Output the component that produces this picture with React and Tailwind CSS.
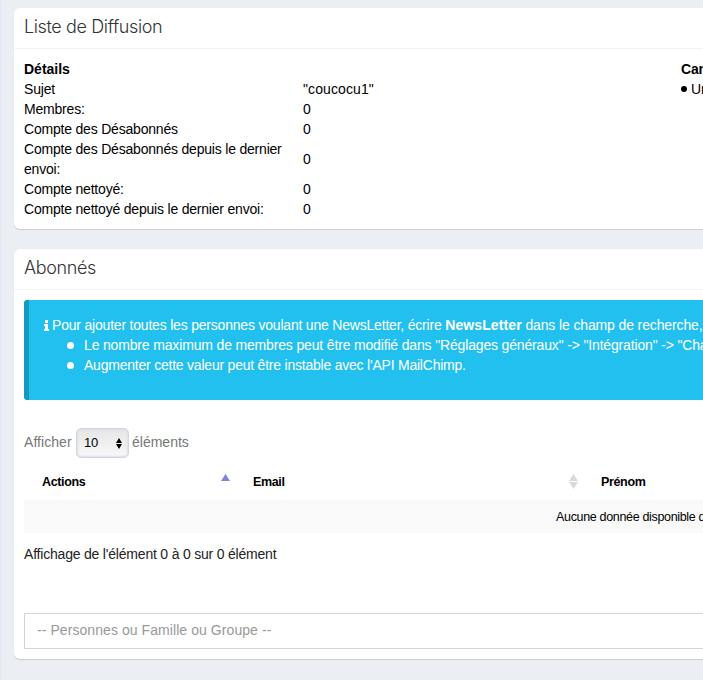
const rows = [
  ['Sujet', '"coucocu1"'],
  ['Membres:', '0'],
  ['Compte des Désabonnés', '0'],
  ['Compte des Désabonnés depuis le dernier envoi:', '0'],
  ['Compte nettoyé:', '0'],
  ['Compte nettoyé depuis le dernier envoi:', '0'],
];

function Card({ title, className, children }) {
  return (
    <section className={`w-[1000px] rounded-md bg-white shadow-[0_1px_1px_rgba(0,0,0,0.14)] ${className}`}>
      <h3 className="h-[41px] border-b border-[#f4f4f4] pl-2.5 font-['Inter','Liberation_Sans',sans-serif] text-[18px] leading-[38px] font-light tracking-[-0.38px] text-[#333]">
        {title}
      </h3>
      {children}
    </section>
  );
}

function Bullet() {
  return <span className="mr-[10px] size-[7px] rounded-full bg-current" />;
}

export default function App() {
  return (
    <div className="h-[680px] w-[703px] overflow-hidden border-l-2 border-[#e6e8f4] bg-[#ebeef3] pt-2 pl-3 font-['Liberation_Sans',Arial,sans-serif] text-[14px] leading-5 tracking-[-0.2px] text-black">
      <Card title="Liste de Diffusion" className="h-[221px]">
        <div className="flex pt-2.5 pl-2.5">
          <div className="w-[657px]">
            <div className="font-bold tracking-[0px]">Détails</div>
            {rows.map(([label, value]) => (
              <div key={label} className="flex items-center">
                <div className="w-[279px] pr-4">{label}</div>
                <div className="tracking-[0.1px]">{value}</div>
              </div>
            ))}
          </div>
          <div className="whitespace-nowrap">
            <div className="font-bold">Campagnes</div>
            <div className="flex items-center">
              <span className="mr-[4px] size-[6px] rounded-full bg-current" />
              Une
            </div>
          </div>
        </div>
      </Card>

      <Card title="Abonnés" className="mt-5 h-[410px]">
        <div className="pt-2.5 pl-2.5">
          <div className="h-[100px] rounded-[3px] border-l-5 border-[#1799bd] bg-[#22c0ef] pt-[15px] pl-[15px] tracking-[-0.16px] whitespace-nowrap text-white">
            <div className="flex items-center">
              <svg className="mr-[3px] h-[11px] w-[5px]" viewBox="0 0 5 11" fill="currentColor">
                <path d="M1 0h3v3H1zM0 4h4v5h1v2H0V9h1V6H0z" />
              </svg>
              <span className="tracking-[-0.2px]">
                Pour ajouter toutes les personnes voulant une NewsLetter, écrire <b className="font-bold tracking-[0.1px]">NewsLetter</b> <span className="tracking-[-0.13px]">dans le champ de recherche,</span>
              </span>
            </div>
            <ul className="pl-[23px]">
              <li className="flex items-center">
                <Bullet />
                Le nombre maximum de membres peut être modifié dans "Réglages généraux" -&gt; "Intégration" -&gt; "Charger"
              </li>
              <li className="flex items-center tracking-[-0.22px]">
                <Bullet />
                Augmenter cette valeur peut être instable avec l'API MailChimp.
              </li>
            </ul>
          </div>

          <div className="mt-7 flex h-[30px] items-center text-[#777]">
            <span className="-mt-0.5 w-[52px] tracking-[0.05px]">Afficher</span>
            <div className="flex h-[30px] w-[53px] items-center justify-between rounded-[5px] border border-[#d2d6de] bg-linear-to-b from-[#e6e6e6] to-[#f8f8f8] pr-[6px] pl-[7px] text-[13px] text-black shadow-[inset_0_0_2px_1px_#dcdfe8]">
              <span>10</span>
              <svg className="h-[11px] w-[6px]" viewBox="0 0 6 11">
                <path d="M3 0l3 5H0zM0 6h6L3 11z" />
              </svg>
            </div>
            <span className="-mt-0.5 ml-[3px] tracking-[0px]">éléments</span>
          </div>

          <div className="flex h-[42px] items-center pt-1.5 pl-[18px] text-[12.5px] font-bold tracking-[-0.35px]">
            <span className="w-[179px]">Actions</span>
            <svg className="mt-[-9px] h-[7px] w-[9px]" viewBox="0 0 9 7">
              <path d="M4.5 0L9 7H0z" fill="#8085dc" />
            </svg>
            <span className="ml-[23px] w-[316px]">Email</span>
            <svg className="-mt-px h-[15px] w-[9px]" viewBox="0 0 9 15" fill="#d9d9d9">
              <path d="M4.5 0L9 7H0zM0 8h9l-4.500 7z" />
            </svg>
            <span className="ml-[23px]">Prénom</span>
          </div>
          <div className="h-[33px] bg-[#f9f9f9] pt-px pl-[532px] text-[12.5px] leading-[32px] tracking-[-0.33px] whitespace-nowrap">
            Aucune donnée disponible dans le tableau
          </div>
          <div className="mt-[11px] text-[#222]">Affichage de l'élément 0 à 0 sur 0 élément</div>
          <div className="mt-[49px] h-9 border border-[#d2d2df] pl-3 leading-[33px] tracking-[0.07px] text-[#999]">
            -- Personnes ou Famille ou Groupe --
          </div>
        </div>
      </Card>
    </div>
  );
}
